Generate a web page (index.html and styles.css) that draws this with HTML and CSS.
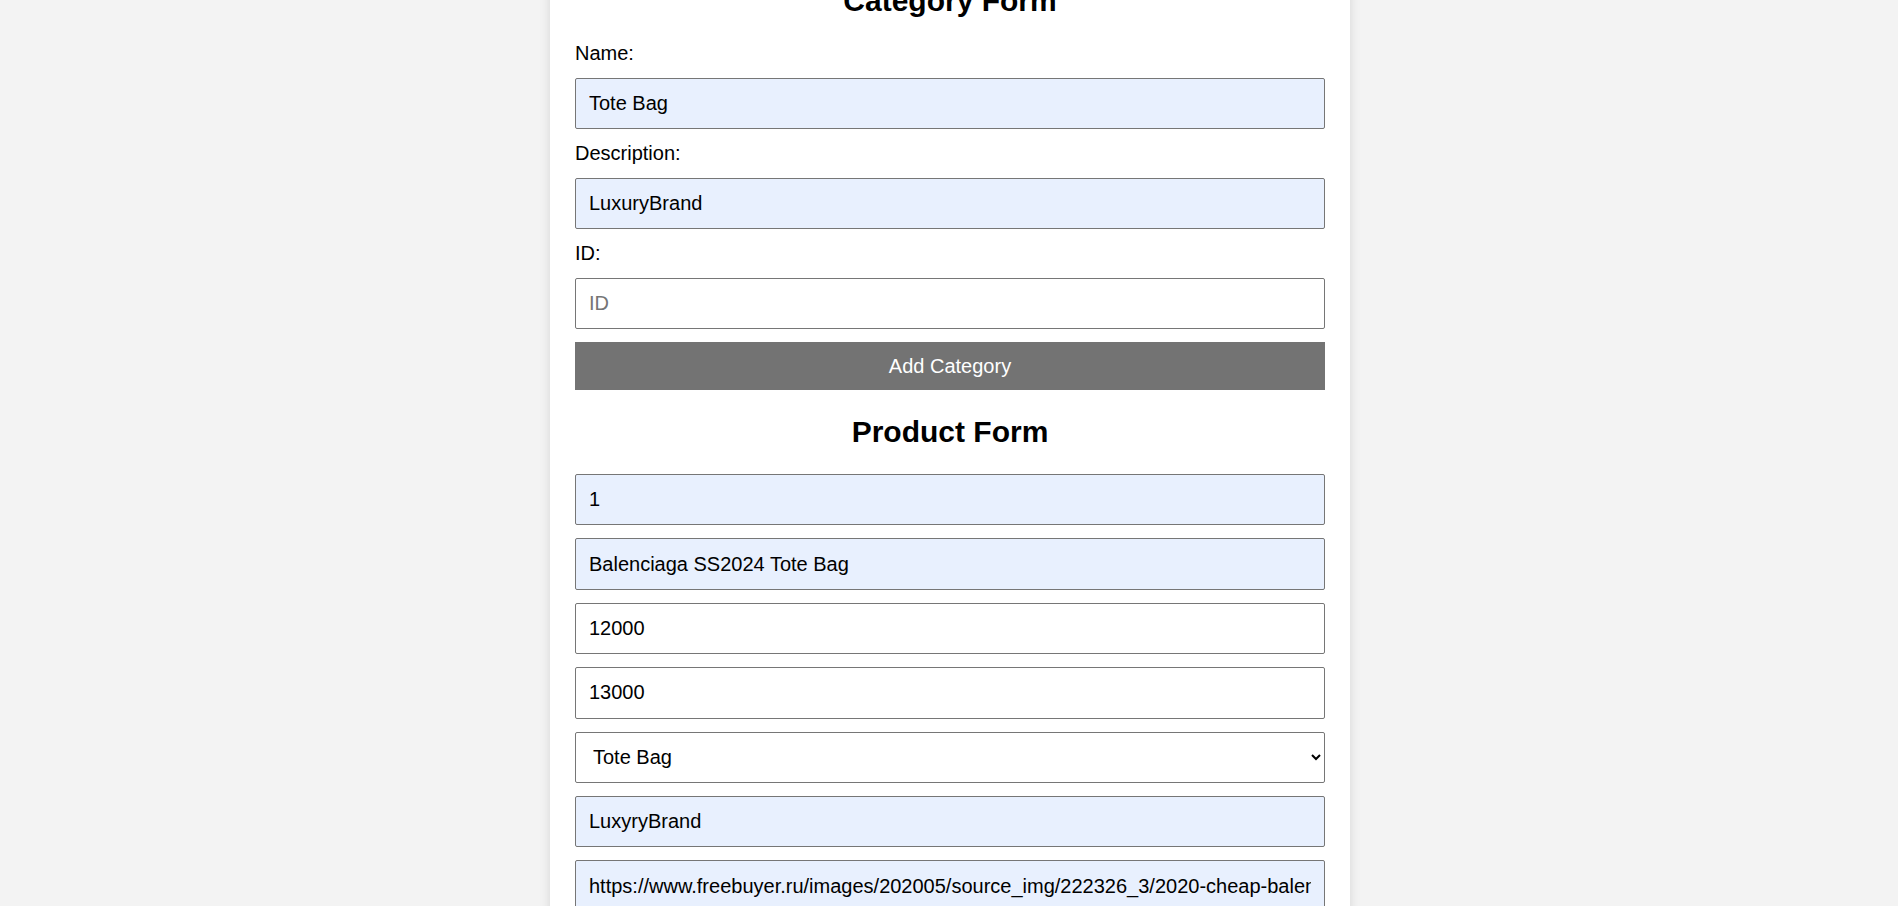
FILE: index.html
```html
<!DOCTYPE html>
<html lang="en">
<head>
<meta charset="utf-8">
<title>Category and Product Forms</title>
<link rel="stylesheet" href="styles.css">
</head>
<body>
<div class="card">
  <h2 class="form-title">Category Form</h2>
  <form class="form">
    <label class="field-label" for="cat-name">Name:</label>
    <input class="field autofilled" id="cat-name" type="text" value="Tote Bag">
    <label class="field-label" for="cat-desc">Description:</label>
    <input class="field autofilled" id="cat-desc" type="text" value="LuxuryBrand">
    <label class="field-label" for="cat-id">ID:</label>
    <input class="field" id="cat-id" type="text" placeholder="ID">
    <button class="submit" type="button">Add Category</button>
  </form>

  <h2 class="form-title">Product Form</h2>
  <form class="form">
    <input class="field autofilled" type="text" value="1">
    <input class="field autofilled" type="text" value="Balenciaga SS2024 Tote Bag">
    <input class="field" type="text" value="12000">
    <input class="field" type="text" value="13000">
    <select class="field select">
      <option selected>Tote Bag</option>
      <option>Backpack</option>
    </select>
    <input class="field autofilled" type="text" value="LuxyryBrand">
    <input class="field autofilled" type="text" value="https://www.freebuyer.ru/images/202005/source_img/222326_3/2020-cheap-balenciaga-tote-bag.jpg">
    <button class="submit" type="button">Add Product</button>
  </form>
</div>
</body>
</html>
```

FILE: styles.css
```css
html, body {
  margin: 0;
  padding: 0;
}

body {
  background: #f3f3f3;
  font-family: "Liberation Sans", Arial, sans-serif;
  font-size: 20px;
  color: #000;
  padding-left: 2px;
}

.card {
  width: 800px;
  box-sizing: border-box;
  margin: -61.1px auto 0;
  padding: 20px 25px 25px;
  background: #fff;
  box-shadow: 0 0 10px rgba(0, 0, 0, 0.12);
}

.form-title {
  font-size: 30px;
  font-weight: bold;
  line-height: 34.5px;
  text-align: center;
  margin: 24.9px 0 24.1px;
}

.form {
  display: flex;
  flex-direction: column;
}

.field-label {
  display: block;
  font-size: 20px;
  line-height: 23px;
  margin-bottom: 12.5px;
}

.field {
  display: block;
  width: 100%;
  height: 51.5px;
  box-sizing: border-box;
  margin: 0 0 12.9px;
  padding: 0 13px;
  font-family: "Liberation Sans", Arial, sans-serif;
  font-size: 20px;
  color: #000;
  background: #fff;
  border: 1px solid #767676;
  border-radius: 2px;
  outline: none;
}

.field::placeholder {
  color: #757575;
}

.autofilled {
  background: #e8f0fe;
}

.select {
  padding-left: 13px;
}

.submit {
  display: block;
  width: 100%;
  height: 48px;
  margin-top: 0.4px;
  border: none;
  border-radius: 0;
  background: #737373;
  color: #fff;
  font-family: "Liberation Sans", Arial, sans-serif;
  font-size: 20px;
  cursor: pointer;
}
```
